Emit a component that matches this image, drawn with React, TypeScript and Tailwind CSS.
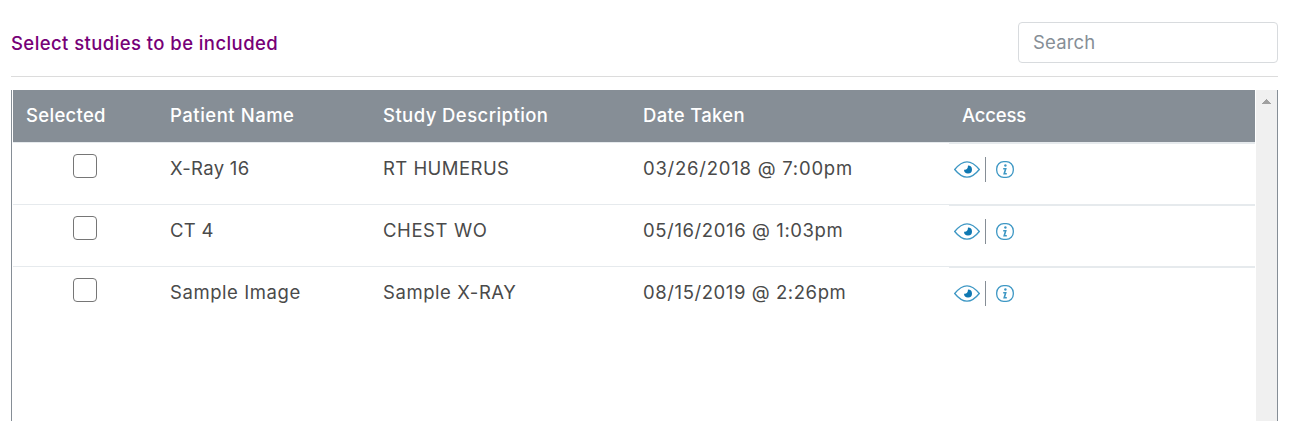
const columns = [
  { label: "Selected", className: "tracking-[0.3px]" },
  { label: "Patient Name", className: "tracking-[0.52px]" },
  { label: "Study Description", className: "tracking-[0.43px]" },
  { label: "Date Taken", className: "tracking-[0.3px]" },
  { label: "Access", className: "tracking-[-0.2px]" },
];

const studies = [
  {
    name: { text: "X-Ray 16", className: "tracking-[0.3px]" },
    description: { text: "RT HUMERUS", className: "tracking-[0.45px]" },
    date: { text: "03/26/2018 @ 7:00pm", className: "tracking-[0.76px]" },
  },
  {
    name: { text: "CT 4", className: "tracking-[0.3px]" },
    description: { text: "CHEST WO", className: "tracking-[0.58px]" },
    date: { text: "05/16/2016 @ 1:03pm", className: "tracking-[0.6px]" },
  },
  {
    name: { text: "Sample Image", className: "tracking-[0.57px]" },
    description: { text: "Sample X-RAY", className: "tracking-[0.57px]" },
    date: { text: "08/15/2019 @ 2:26pm", className: "tracking-[0.58px]" },
  },
];

const gridColumns = "grid grid-cols-[144px_213px_260px_319px_306px]";

function EyeIcon() {
  return (
    <svg width="26" height="17" viewBox="0 0 26 17" fill="none">
      <path
        d="M.7 8.5C4.6 3.7 8.5.8 13 .8s8.4 2.9 12.3 7.7C21.400 13.300 17.500 16.200 13 16.200S4.600 13.300.7 8.500Z"
        stroke="#3d97c4"
        strokeWidth="1.3"
      />
      <path d="M14 4.500a4 4 0 1 1-4 4.200c1.800.5 4-.4 4-4.200Z" fill="#0f78b2" />
    </svg>
  );
}

function InfoIcon() {
  return (
    <svg width="18" height="17" viewBox="0 0 18 17" fill="none" stroke="#3d97c4">
      <rect x=".7" y=".7" width="16.600" height="15.600" rx="7" strokeWidth="1.300" />
      <circle cx="9.400" cy="4.500" r="1.200" fill="#3d97c4" stroke="none" />
      <path d="M7.200 7.700h2.500L8.200 12.700h2.600" strokeWidth="1.600" />
    </svg>
  );
}

export default function App() {
  return (
    <main className="flex h-[421px] flex-col overflow-hidden bg-white pr-[15px] pl-[11px] font-['Inter',sans-serif] text-[18.5px] text-[#4a4a4a]">
      <header className="flex h-[77px] shrink-0 items-start justify-between border-b border-[#dcdcdc] pt-[22px]">
        <h1 className="leading-[42px] font-medium tracking-[0.42px] text-[#770077]">Select studies to be included</h1>
        <input
          type="text"
          placeholder="Search"
          className="h-[41px] w-[260px] rounded border border-[#d8dbde] px-[14px] pb-[2px] tracking-[0.15px] placeholder:text-[#868e96]"
        />
      </header>

      <section className="mt-[13px] flex flex-1 border-x border-[#868e96] pl-px">
        <div className="w-[1242px]">
          <div className={`${gridColumns} h-[52px] bg-[#868e96] leading-[51px] font-medium text-white`}>
            {columns.map((column) => (
              <div key={column.label} className={`pl-[13px] ${column.className}`}>
                {column.label}
              </div>
            ))}
          </div>

          {studies.map((study) => (
            <div key={study.name.text} className={`${gridColumns} h-[62px] leading-[51px]`}>
              <div className="border-t border-[#e6eaed] pt-[11px] pl-[60px]">
                <input
                  type="checkbox"
                  className="block size-6 appearance-none rounded border border-[#767676] bg-white"
                />
              </div>
              <div className={`border-t border-[#e6eaed] pl-[13px] ${study.name.className}`}>{study.name.text}</div>
              <div className={`border-t border-[#e6eaed] pl-[13px] ${study.description.className}`}>
                {study.description.text}
              </div>
              <div className={`border-t border-[#e6eaed] pl-[13px] ${study.date.className}`}>{study.date.text}</div>
              <div className="flex items-start border-t-2 border-[#e6eaed] pt-[13px] pl-[5px]">
                <div className="flex h-[25px] items-center border-r border-[#868e96] pr-[5px]">
                  <EyeIcon />
                </div>
                <div className="ml-[10px] flex h-[25px] items-center">
                  <InfoIcon />
                </div>
              </div>
            </div>
          ))}
        </div>

        <div className="ml-px flex w-[21px] justify-center bg-[#f0f0f0] pt-[9px]">
          <svg width="9" height="5" viewBox="0 0 9 5" fill="#a0a0a0" shapeRendering="crispEdges">
            <path d="M0 5 4 0h1l4 5Z" />
          </svg>
        </div>
      </section>
    </main>
  );
}
